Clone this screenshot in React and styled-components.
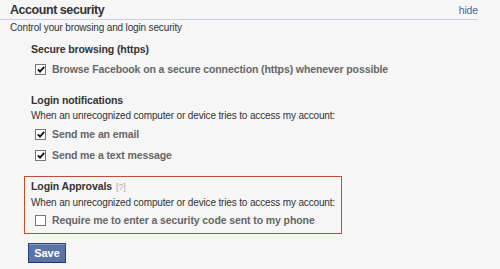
import React from "react";
import styled, { createGlobalStyle } from "styled-components";

const Global = createGlobalStyle`
  html, body { margin: 0; padding: 0; background: #f6f6f6; }
  body { font-family: Tahoma, "Liberation Sans", Arial, sans-serif; font-size: 10px; letter-spacing: -0.15px; color: #333; }
`;

const Page = styled.div`
  width: 478px;
`;

const Header = styled.div`
  display: flex;
  justify-content: space-between;
  align-items: flex-end;
  height: 19px;
  padding-left: 10px;
  border-bottom: 1px solid #c9d0e0;
`;

const Title = styled.h2`
  margin: 0;
  font-size: 12.5px;
  letter-spacing: -0.45px;
  font-weight: bold;
  color: #333;
  line-height: 16px;
  padding-bottom: 1px;
`;

const Hide = styled.a`
  color: #4b64a0;
  font-size: 10.5px;
  line-height: 16px;
  padding-bottom: 1px;
  cursor: pointer;
`;

const Sub = styled.div`
  padding-left: 10px;
  margin-top: 1px;
  line-height: 14px;
`;

const Section = styled.div`
  padding-left: ${(p) => p.$indent || 31}px;
  margin-top: ${(p) => p.$top || 0}px;
`;

const SectionTitle = styled.div`
  font-weight: bold;
  font-size: 10.5px;
  letter-spacing: -0.1px;
  color: #333;
  line-height: 14px;
`;

const Help = styled.span`
  font-weight: normal;
  color: #aaa;
  font-size: 9px;
  margin-left: 4px;
`;

const Desc = styled.div`
  margin-top: 2px;
  line-height: 14px;
  color: #333;
`;

const Row = styled.label`
  display: flex;
  align-items: center;
  height: 20px;
  margin-top: ${(p) => p.$top || 0}px;
  padding-left: 4px;
  font-weight: bold;
  color: #666;
  font-size: 10.5px;
  letter-spacing: -0.1px;
`;

const Box = styled.span`
  width: 9px;
  height: 9px;
  border: 1px solid #777;
  background: #fff;
  margin-right: 6px;
  display: flex;
  align-items: center;
  justify-content: center;
  flex-shrink: 0;
`;

const Approvals = styled.div`
  margin: 11px 0 0 24px;
  width: 310px;
  border: 1px solid #c0502e;
  padding: 2px 0 3px 6px;
`;

const SaveButton = styled.button`
  margin: 9px 0 0 28px;
  height: 20px;
  width: 38px;
  padding: 0;
  background: #5b74a8;
  border: 1px solid #29447e;
  border-bottom-color: #1a356e;
  box-shadow: inset 0 1px 0 #8a9cc2;
  color: #fff;
  font-family: inherit;
  font-weight: bold;
  font-size: 11px;
  letter-spacing: 0;
`;

const Check = ({ checked }) => (
  <Box>
    {checked && (
      <svg width="8" height="7" viewBox="0 0 8 7">
        <path d="M0.8 3.4 L3 5.6 L7.2 0.8" fill="none" stroke="#111" strokeWidth="1.8" />
      </svg>
    )}
  </Box>
);

export default function App() {
  return (
    <Page>
      <Global />
      <Header>
        <Title>Account security</Title>
        <Hide>hide</Hide>
      </Header>
      <Sub>Control your browsing and login security</Sub>

      <Section $top={7}>
        <SectionTitle>Secure browsing (https)</SectionTitle>
        <Row $top={3}>
          <Check checked />
          Browse Facebook on a secure connection (https) whenever possible
        </Row>
      </Section>

      <Section $top={14}>
        <SectionTitle>Login notifications</SectionTitle>
        <Desc>When an unrecognized computer or device tries to access my account:</Desc>
        <Row $top={1}>
          <Check checked />
          Send me an email
        </Row>
        <Row $top={1}>
          <Check checked />
          Send me a text message
        </Row>
      </Section>

      <Approvals>
        <SectionTitle>
          Login Approvals<Help>[?]</Help>
        </SectionTitle>
        <Desc>When an unrecognized computer or device tries to access my account:</Desc>
        <Row>
          <Check />
          Require me to enter a security code sent to my phone
        </Row>
      </Approvals>

      <SaveButton>Save</SaveButton>
    </Page>
  );
}
